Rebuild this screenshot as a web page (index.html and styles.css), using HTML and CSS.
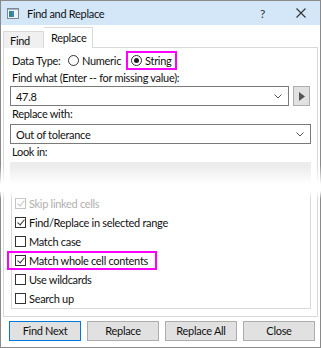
FILE: index.html
```html
<!DOCTYPE html>
<html>
<head>
  <meta charset="UTF-8">
  <title>Find and Replace</title>
  <link rel="stylesheet" href="styles.css">
</head>
<body>
  <div class="window">
    <div class="titlebar">
      <svg class="app-icon" width="12" height="11" viewBox="0 0 12 11">
        <rect x="0.5" y="0.5" width="11" height="10" fill="#eef3f6" stroke="#7d8a93"/>
        <rect x="2" y="3" width="3" height="6" fill="#2b8a86"/>
        <rect x="5" y="3" width="2" height="6" fill="#4a7fc0"/>
        <rect x="1" y="1" width="10" height="1" fill="#9fb4c4"/>
      </svg>
      <span class="title">Find and Replace</span>
      <span class="help">?</span>
      <svg class="close" width="10" height="10" viewBox="0 0 10 10">
        <path d="M0.5 0.5 L9.5 9.5 M9.5 0.5 L0.5 9.5" stroke="#333" stroke-width="1.1"/>
      </svg>
    </div>

    <div class="client">
      <div class="tabs">
        <div class="tab">Find</div>
        <div class="tab active">Replace</div>
      </div>

      <div class="panel">
        <div class="datatype">
          <span class="dt-label">Data Type:</span>
          <span class="radio"><span class="circle"></span>Numeric</span>
          <span class="radio checked mark"><span class="circle"></span>String</span>
        </div>

        <div class="label">Find what (Enter -- for missing value):</div>
        <div class="find-row">
          <div class="combo">
            <span>47.8</span>
            <svg class="chev" width="8" height="5" viewBox="0 0 8 5"><path d="M0.5 0.5 L4 4 L7.5 0.5" fill="none" stroke="#555"/></svg>
          </div>
          <div class="arrow-btn">
            <svg width="6" height="9" viewBox="0 0 6 9"><path d="M0 0 L6 4.5 L0 9 Z" fill="#555"/></svg>
          </div>
        </div>

        <div class="label">Replace with:</div>
        <div class="combo">
          <span>Out of tolerance</span>
          <svg class="chev" width="8" height="5" viewBox="0 0 8 5"><path d="M0.5 0.5 L4 4 L7.5 0.5" fill="none" stroke="#555"/></svg>
        </div>

        <div class="label">Look in:</div>
        <div class="lookin"></div>

        <div class="options">
          <div class="check disabled"><span class="box on"></span>Skip linked cells</div>
          <div class="check"><span class="box on"></span>Find/Replace in selected range</div>
          <div class="check"><span class="box"></span>Match case</div>
          <div class="check mark-row"><span class="box on"></span>Match whole cell contents</div>
          <div class="check"><span class="box"></span>Use wildcards</div>
          <div class="check"><span class="box"></span>Search up</div>
        </div>
      </div>

      <div class="buttons">
        <div class="btn default">Find Next</div>
        <div class="btn">Replace</div>
        <div class="btn">Replace All</div>
        <div class="btn">Close</div>
      </div>
    </div>

    <div class="fade"></div>
  </div>
</body>
</html>
```

FILE: styles.css
```css
body {
  margin: 0;
  font-family: Lato, "Noto Sans", sans-serif;
  font-size: 11px;
  letter-spacing: -0.3px;
  color: #111;
  white-space: nowrap;
}

.window {
  position: relative;
  width: 321px;
  height: 348px;
  box-sizing: border-box;
  border: 1px solid #8a8a8a;
  background: #fff;
}

.titlebar {
  display: flex;
  align-items: center;
  height: 24px;
  background: #d3e7f8;
  padding-left: 6px;
}

.app-icon {
  margin-right: 8px;
}

.title {
  flex: 1;
  font-size: 11px;
}

.help {
  font-size: 12px;
  color: #333;
  margin-right: 31px;
}

.close {
  margin-right: 14px;
}

.client {
  padding: 0 2px;
}

.tabs {
  display: flex;
  align-items: flex-end;
  height: 21px;
  margin-top: 2px;
  position: relative;
  z-index: 1;
}

.tab {
  width: 41px;
  height: 17px;
  box-sizing: border-box;
  line-height: 17px;
  padding-left: 6px;
  background: #f0f0f0;
  border: 1px solid #d9d9d9;
  border-bottom: none;
}

.tab.active {
  width: 49px;
  height: 21px;
  line-height: 19px;
  padding-left: 7px;
  background: #fff;
  border-left: none;
}

.panel {
  margin-top: -1px;
  border: 1px solid #d9d9d9;
  padding: 3px 6px 7px;
}

.datatype {
  display: flex;
  align-items: center;
  height: 19px;
}

.dt-label {
  width: 56px;
  padding-left: 2px;
}

.radio {
  display: inline-flex;
  align-items: center;
}

.circle {
  width: 11px;
  height: 11px;
  box-sizing: border-box;
  border: 1px solid #333;
  border-radius: 50%;
  margin-right: 3px;
  display: flex;
  align-items: center;
  justify-content: center;
}

.radio.checked .circle::after {
  content: "";
  width: 5px;
  height: 5px;
  border-radius: 50%;
  background: #222;
}

.radio.mark {
  margin-left: 5px;
  height: 15px;
  padding: 0 4px 0 3px;
  border: 2px solid #f0f;
}

.label {
  line-height: 16px;
  padding-left: 2px;
}

.find-row {
  display: flex;
  gap: 4px;
}

.find-row .combo {
  flex: 1;
  margin-top: 0;
}

.combo {
  display: flex;
  align-items: center;
  justify-content: space-between;
  height: 20px;
  box-sizing: border-box;
  border: 1px solid #7a7a7a;
  padding: 0 6px 0 5px;
  margin-top: 2px;
  background: #fff;
}

.arrow-btn {
  width: 17px;
  height: 20px;
  box-sizing: border-box;
  border: 1px solid #adadad;
  background: #e1e1e1;
  display: flex;
  align-items: center;
  justify-content: center;
  margin-right: 1px;
}

.lookin {
  height: 22px;
  margin-top: 2px;
  background: #ececec;
}

.options {
  margin: 5px 0 0 1px;
  border: 1px solid #d9d9d9;
  padding: 4px 3px 0;
}

.check {
  position: relative;
  display: flex;
  align-items: center;
  height: 19px;
}

.box {
  width: 11px;
  height: 11px;
  box-sizing: border-box;
  border: 1px solid #333;
  margin-right: 3px;
  position: relative;
}

.box.on::after {
  content: "";
  position: absolute;
  left: 3px;
  top: 0px;
  width: 3px;
  height: 6px;
  border: solid #333;
  border-width: 0 1.3px 1.3px 0;
  transform: rotate(40deg);
}

.check.disabled {
  color: #b0b0b0;
}

.check.disabled .box {
  border-color: #c4c4c4;
}

.check.disabled .box.on::after {
  border-color: #c4c4c4;
}

.mark-row::after {
  content: "";
  position: absolute;
  left: -8px;
  top: 0;
  width: 150px;
  height: 19px;
  box-sizing: border-box;
  border: 2px solid #f0f;
}

.buttons {
  display: flex;
  gap: 6px;
  margin: 4px 0 0 6px;
}

.btn {
  width: 72px;
  height: 20px;
  box-sizing: border-box;
  border: 1px solid #adadad;
  background: #e1e1e1;
  text-align: center;
  line-height: 18px;
}

.btn.default {
  border: 1px solid #0078d7;
}

.fade {
  position: absolute;
  left: -1px;
  right: -1px;
  top: 164px;
  height: 34px;
  background: linear-gradient(to bottom, rgba(255,255,255,0) 0%, #fff 58%, #fff 76%, rgba(255,255,255,0) 100%);
}
```
